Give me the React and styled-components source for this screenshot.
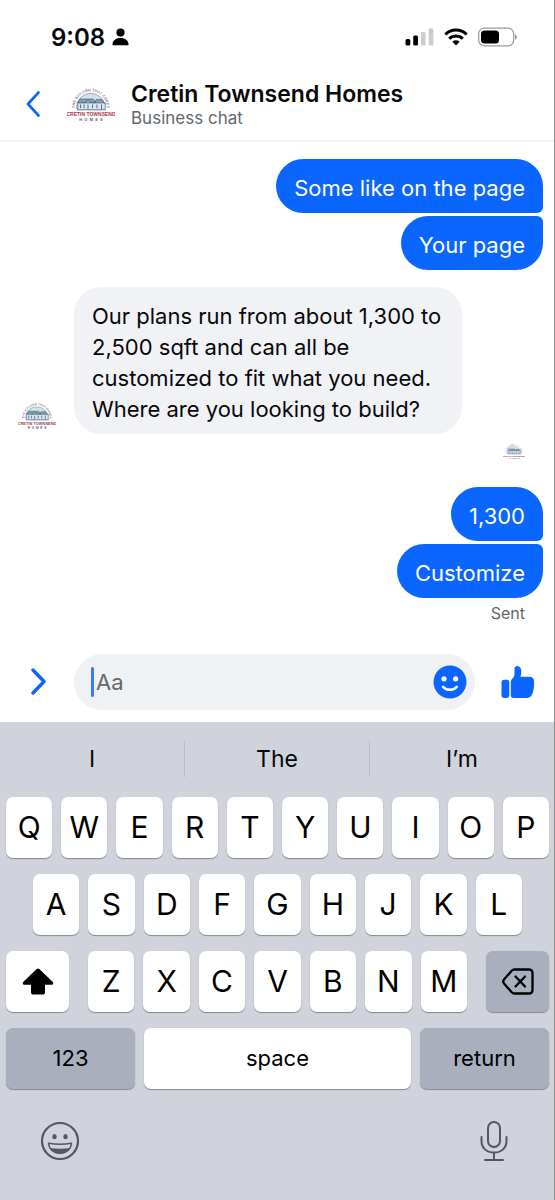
import React, { useState } from "react";
import styled, { createGlobalStyle } from "styled-components";

const TOP_ROW = ["Q", "W", "E", "R", "T", "Y", "U", "I", "O", "P"];
const HOME_ROW = ["A", "S", "D", "F", "G", "H", "J", "K", "L"];
const BOTTOM_ROW = ["Z", "X", "C", "V", "B", "N", "M"];
const SUGGESTIONS = ["I", "The", "I’m"];

const HomesLogo = ({ width, id }) => (
  <LogoSvg viewBox="0 0 48 36" $width={width} role="img" aria-label="Cretin Townsend Homes logo">
    <path id={id} d="M7.800 21.500a16 16 0 0 1 32 0" fill="none" />
    <text fontSize="3.9" fill="#7d4a66" textAnchor="middle">
      <textPath href={`#${id}`} startOffset="50%">THE BUILDER THAT CARES</textPath>
    </text>
    <path d="M9.600 22.500v-1a14.200 14.200 0 0 1 28.400 0v1z" fill="#d3e1ea" stroke="#7c90a6" strokeWidth="0.7" />
    <path d="M10.500 16.500L13 13h13l2.500 3.500zM27 17l2-3.400h6L38.500 18z" fill="#7fa3a6" stroke="#38566e" strokeWidth="0.6" />
    <path d="M17.500 17.500l3.500-4 3.500 4z" fill="#90b0b2" stroke="#38566e" strokeWidth="0.6" />
    <path d="M10.800 17h27.400v6.600H10.800z" fill="#dce6ed" stroke="#3f5d7b" strokeWidth="0.6" />
    <path d="M13.500 18.500v3.600M17 18.500v3.600M21 18.500v5M25.500 18.500v3.600M30 18.500v3.600M34.500 18.500v5" stroke="#4d6a90" strokeWidth="1" />
    <path d="M10 23.800h29" stroke="#7893a0" strokeWidth="0.9" />
    <text x="24" y="30" fontSize="5" fontWeight="700" fill="#a13c50" textAnchor="middle">CRETIN TOWNSEND</text>
    <text x="24" y="35" fontSize="4" fontWeight="700" fill="#4b6387" textAnchor="middle" style={{ whiteSpace: "pre" }}>H  O  M  E  S</text>
  </LogoSvg>
);

const PersonIcon = () => (
  <svg width="17" height="18" viewBox="0 0 17 18">
    <circle cx="8.5" cy="4.6" r="4.1" />
    <path d="M.5 16.200c0-3.600 3.400-6.200 8-6.200s8 2.600 8 6.200c0 .7-.4 1-1 1h-14c-.6 0-1-.3-1-1z" />
  </svg>
);

const SignalIcon = () => (
  <svg width="29" height="18" viewBox="0 0 29 18">
    <rect x="0.5" y="11" width="4.8" height="6.5" rx="1.5" />
    <rect x="8.2" y="7.500" width="4.8" height="10" rx="1.5" />
    <rect x="15.9" y="4" width="4.8" height="13.5" rx="1.5" fill="#cdcdcd" />
    <rect x="23.6" y="0.3" width="4.8" height="17.2" rx="1.5" fill="#cdcdcd" />
  </svg>
);

const WifiIcon = () => (
  <svg width="24" height="18" viewBox="0 0 24 18" fill="none" stroke="#000" strokeWidth="3">
    <path d="M1.300 6.500a15.200 15.200 0 0 1 21.400 0" />
    <path d="M5.200 10.800a9.700 9.700 0 0 1 13.600 0" />
    <path d="M12 17.500l-3.600-3.700a5.200 5.200 0 0 1 7.200 0z" fill="#000" stroke="none" />
  </svg>
);

const BatteryIcon = () => (
  <svg width="39" height="20" viewBox="0 0 39 20">
    <rect x="0.7" y="1.2" width="35" height="17.6" rx="5.5" fill="none" stroke="#999" strokeWidth="1.2" />
    <rect x="3" y="3.5" width="18" height="13" rx="3.5" />
    <path d="M37 7.200c1.200.6 1.800 1.500 1.800 2.800s-.6 2.200-1.800 2.800z" fill="#999" />
  </svg>
);

const BackIcon = () => (
  <svg width="14" height="26" viewBox="0 0 14 26" fill="none" stroke="#0a66ff" strokeWidth="2.6" strokeLinecap="round" strokeLinejoin="round">
    <path d="M12.500 1.500L2 13l10.500 11.500" />
  </svg>
);

const ExpandIcon = () => (
  <svg width="15" height="27" viewBox="0 0 15 27" fill="none" stroke="#0a66ff" strokeWidth="3.4" strokeLinecap="round" strokeLinejoin="round">
    <path d="M2 2l11 11.500L2 25" />
  </svg>
);

const SmileIcon = () => (
  <svg width="34" height="34" viewBox="0 0 34 34">
    <circle cx="17" cy="17" r="16.5" fill="#0a66ff" />
    <circle cx="11" cy="13.8" r="2.6" fill="#fff" />
    <circle cx="22.6" cy="13.8" r="2.6" fill="#fff" />
    <path d="M10 21.800c3.800 4 10 4 13.800 0" fill="none" stroke="#fff" strokeWidth="2.4" strokeLinecap="round" />
  </svg>
);

const ThumbIcon = () => (
  <svg width="34" height="34" viewBox="0 0 34 34" fill="#0a66ff">
    <rect x="0.5" y="14.8" width="7.8" height="18.200" rx="2.4" />
    <path d="M9.800 17.500c0-1.800.6-2.800 1.700-3.900 1.500-1.500 2-3.100 2-5.600V3.700C13.500 2 14.600 1 16.200 1c2.700 0 4.100 2.200 4.100 5.800 0 2-.3 3.600-.9 5h8.800c3 0 4.900 1.700 4.900 4.500v2.500c0 6.500-1.600 14.200-6.900 14.200H12.300c-1.600 0-2.500-.9-2.500-2.400z" />
  </svg>
);

const ShiftIcon = () => (
  <svg width="32" height="27" viewBox="0 0 32 27">
    <path d="M14.700 1.100a1.900 1.900 0 0 1 2.600 0l13.300 12.600c1.200 1.200.7 3-1 3H23v7.500c0 1.500-.9 2.400-2.400 2.400h-9.200C9.900 26.600 9 25.700 9 24.200v-7.500H2.400c-1.700 0-2.200-1.800-1-3z" />
  </svg>
);

const DeleteIcon = () => (
  <svg width="32" height="27" viewBox="0 0 32 27" fill="none" stroke="#000" strokeWidth="2.3" strokeLinecap="round" strokeLinejoin="round">
    <path d="M12.500 1.500h14.200c2.300 0 3.800 1.500 3.800 3.800v16.400c0 2.300-1.500 3.800-3.800 3.800H12.500c-1.200 0-2-.4-2.800-1.200l-7.500-8.500c-1.200-1.400-1.200-3.200 0-4.600l7.500-8.500c.8-.8 1.600-1.200 2.800-1.200z" />
    <path d="M13.500 8.500l9.500 10M23 8.500l-9.500 10" />
  </svg>
);

const EmojiIcon = () => (
  <svg width="40" height="40" viewBox="0 0 40 40" fill="none" stroke="#53575f" strokeWidth="2.2">
    <circle cx="20" cy="20" r="18" />
    <ellipse cx="14.5" cy="15.7" rx="2.2" ry="2.6" fill="#53575f" stroke="none" />
    <ellipse cx="25.5" cy="15.7" rx="2.2" ry="2.6" fill="#53575f" stroke="none" />
    <path d="M8.500 22.300c7.200 1.200 15.800 1.200 23 0-.6 6-5.100 10.100-11.500 10.100S9.100 28.300 8.500 22.300z" strokeWidth="1.4" strokeLinejoin="round" />
    <path d="M10 27c6.500 1 13.500 1 20 0-1.900 3.600-5.500 5.600-10 5.600S11.900 30.600 10 27z" fill="#53575f" stroke="none" />
  </svg>
);

const MicIcon = () => (
  <svg width="28" height="42" viewBox="0 0 28 42" fill="none" stroke="#53575f" strokeWidth="2" strokeLinecap="round">
    <rect x="8" y="2" width="12" height="25" rx="6" />
    <path d="M1.500 17v4c0 7 5 11.500 12.500 11.500S26.500 28 26.500 21v-4M14 33v7M5 40h18" />
  </svg>
);

const App = () => {
  const [message, setMessage] = useState("");

  return (
    <Screen>
      <GlobalStyle />
      <StatusBar>
        <Clock>9:08 <PersonIcon /></Clock>
        <StatusIcons>
          <SignalIcon />
          <WifiIcon />
          <BatteryIcon />
        </StatusIcons>
      </StatusBar>

      <Header>
        <IconButton aria-label="Back"><BackIcon /></IconButton>
        <HeaderLogo><HomesLogo width={48} id="arch-header" /></HeaderLogo>
        <div>
          <Title>Cretin Townsend Homes</Title>
          <Subtitle>Business chat</Subtitle>
        </div>
      </Header>

      <Chat>
        <Sent>
          <Bubble $corner="bottom">Some like on the page</Bubble>
          <Bubble $corner="top">Your page</Bubble>
        </Sent>
        <Received>
          <HomesLogo width={38} id="arch-message" />
          <ReceivedBubble>
            Our plans run from about 1,300 to 2,500 sqft and can all be customized to fit what you need. Where are you looking to build?
          </ReceivedBubble>
        </Received>
        <Seen><HomesLogo width={22} id="arch-seen" /></Seen>
        <Sent>
          <Bubble $corner="bottom">1,300</Bubble>
          <Bubble $corner="top">Customize</Bubble>
        </Sent>
        <SentLabel>Sent</SentLabel>
      </Chat>

      <Composer>
        <IconButton aria-label="More options"><ExpandIcon /></IconButton>
        <InputBox>
          <Caret />
          <MessageInput
            type="text"
            aria-label="Message"
            placeholder="Aa"
            value={message}
            onChange={(e) => setMessage(e.target.value)}
          />
          <IconButton aria-label="Choose an emoji"><SmileIcon /></IconButton>
        </InputBox>
        <IconButton aria-label="Send a like"><ThumbIcon /></IconButton>
      </Composer>

      <Keyboard>
        <Suggestions>
          {SUGGESTIONS.map((word) => (
            <Suggestion key={word}>{word}</Suggestion>
          ))}
        </Suggestions>
        <Keys>
          <KeyRow>
            {TOP_ROW.map((key) => <Key key={key}>{key}</Key>)}
          </KeyRow>
          <KeyRow $inset>
            {HOME_ROW.map((key) => <Key key={key}>{key}</Key>)}
          </KeyRow>
          <KeyRow $spread>
            <ShiftKey aria-label="Shift"><ShiftIcon /></ShiftKey>
            <Letters>
              {BOTTOM_ROW.map((key) => <Key key={key}>{key}</Key>)}
            </Letters>
            <ShiftKey $dark aria-label="Delete"><DeleteIcon /></ShiftKey>
          </KeyRow>
          <KeyRow>
            <WideKey $dark>123</WideKey>
            <WideKey $grow>space</WideKey>
            <WideKey $dark>return</WideKey>
          </KeyRow>
        </Keys>
        <KeyboardFooter>
          <IconButton aria-label="Emoji keyboard"><EmojiIcon /></IconButton>
          <IconButton aria-label="Dictate"><MicIcon /></IconButton>
        </KeyboardFooter>
      </Keyboard>
    </Screen>
  );
};

export default App;

const GlobalStyle = createGlobalStyle`
  * {
    box-sizing: border-box;
  }
  body {
    margin: 0;
    background: #fff;
    color: #080809;
    font-family: Inter, "Liberation Sans", sans-serif;
  }
  button, input {
    font-family: inherit;
    color: inherit;
  }
  svg {
    display: block;
    flex-shrink: 0;
  }
`;

const Screen = styled.div`
  min-height: 100vh;
  display: flex;
  flex-direction: column;
  border-right: 1px solid #8e8e90;
`;

const LogoSvg = styled.svg`
  width: ${(props) => props.$width}px;
  font-family: "Liberation Sans", sans-serif;
`;

const IconButton = styled.button`
  display: flex;
  padding: 0;
  border: none;
  background: none;
  cursor: pointer;
`;

const StatusBar = styled.div`
  height: 74px;
  padding: 0 37px 0 51px;
  display: flex;
  align-items: center;
  justify-content: space-between;
`;

const Clock = styled.div`
  display: flex;
  align-items: center;
  gap: 7px;
  font-size: 24px;
  font-weight: 600;
`;

const StatusIcons = styled.div`
  display: flex;
  align-items: center;
  gap: 10px;
`;

const Header = styled.header`
  height: 68px;
  padding: 0 26px 6px;
  display: flex;
  align-items: center;
  border-bottom: 2px solid #f1f1f3;
`;

const HeaderLogo = styled.div`
  margin: 0 16px 0 27px;
`;

const Title = styled.h1`
  margin: 0;
  font-size: 23px;
  line-height: 28px;
  font-weight: 600;
`;

const Subtitle = styled.p`
  margin: 0;
  font-size: 17px;
  line-height: 20px;
  color: #65686c;
`;

const Chat = styled.main`
  padding: 17px 11px 0 18px;
  display: flex;
  flex-direction: column;
`;

const Sent = styled.div`
  display: flex;
  flex-direction: column;
  align-items: flex-end;
  gap: 3px;
`;

const Bubble = styled.div`
  padding: 14px 18px 9px;
  font-size: 22px;
  line-height: 31px;
  color: #fff;
  background: #0a66ff;
  border-radius: ${(props) => (props.$corner === "top" ? "27px 6px 27px 27px" : "27px 27px 6px 27px")};
`;

const Received = styled.div`
  margin-top: 17px;
  display: flex;
  align-items: flex-end;
  gap: 18px;
  > svg {
    margin-bottom: 5px;
  }
`;

const ReceivedBubble = styled(Bubble)`
  max-width: 388px;
  color: #080809;
  background: #f1f2f6;
  border-radius: 27px;
`;

const Seen = styled.div`
  margin: 9px 18px 27px;
  display: flex;
  justify-content: flex-end;
`;

const SentLabel = styled.div`
  margin: 5px 18px 0;
  font-size: 16px;
  line-height: 20px;
  color: #65686c;
  text-align: right;
`;

const Composer = styled.div`
  padding: 31px 19px 12px 31px;
  display: flex;
  align-items: center;
`;

const InputBox = styled.div`
  flex: 1;
  min-width: 0;
  height: 56px;
  margin: 0 26px 0 28px;
  padding: 0 8px 0 17px;
  display: flex;
  align-items: center;
  border-radius: 28px;
  background: #f0f1f5;
`;

const Caret = styled.span`
  width: 3px;
  height: 30px;
  margin-right: 2px;
  border-radius: 2px;
  background: #3b7df0;
`;

const MessageInput = styled.input`
  flex: 1;
  min-width: 0;
  padding: 0;
  border: none;
  outline: none;
  background: none;
  font-size: 22px;
  &::placeholder {
    color: #65686c;
    opacity: 1;
  }
`;

const Keyboard = styled.section`
  flex: 1;
  padding-bottom: 36px;
  background: #d0d3dc;
`;

const Suggestions = styled.div`
  height: 75px;
  display: flex;
  align-items: center;
`;

const Suggestion = styled.button`
  flex: 1;
  height: 36px;
  padding: 0;
  border: none;
  border-left: 1px solid #b9bcc5;
  background: none;
  font-size: 23px;
  cursor: pointer;
  &:first-child {
    border-left: none;
  }
`;

const Keys = styled.div`
  padding: 0 5px 0 6px;
  display: flex;
  flex-direction: column;
  gap: 16px;
`;

const KeyRow = styled.div`
  display: flex;
  gap: ${(props) => (props.$spread ? 19 : 9)}px;
  padding: 0 ${(props) => (props.$inset ? 27 : 0)}px;
`;

const Letters = styled.div`
  flex: 1;
  display: flex;
  gap: 9px;
`;

const Key = styled.button`
  flex: 1;
  min-width: 0;
  height: 61px;
  padding: 0;
  display: flex;
  align-items: center;
  justify-content: center;
  border: none;
  border-radius: 7px;
  background: ${(props) => (props.$dark ? "#a9afbc" : "#fff")};
  box-shadow: 0 1px 1px #85888f;
  font-size: 30px;
  color: #000;
  cursor: pointer;
`;

const ShiftKey = styled(Key)`
  flex: 0 0 63px;
`;

const WideKey = styled(Key)`
  flex: ${(props) => (props.$grow ? "1" : "0 0 129px")};
  font-size: 22px;
`;

const KeyboardFooter = styled.div`
  padding: 31px 46px 0 40px;
  display: flex;
  align-items: center;
  justify-content: space-between;
`;
